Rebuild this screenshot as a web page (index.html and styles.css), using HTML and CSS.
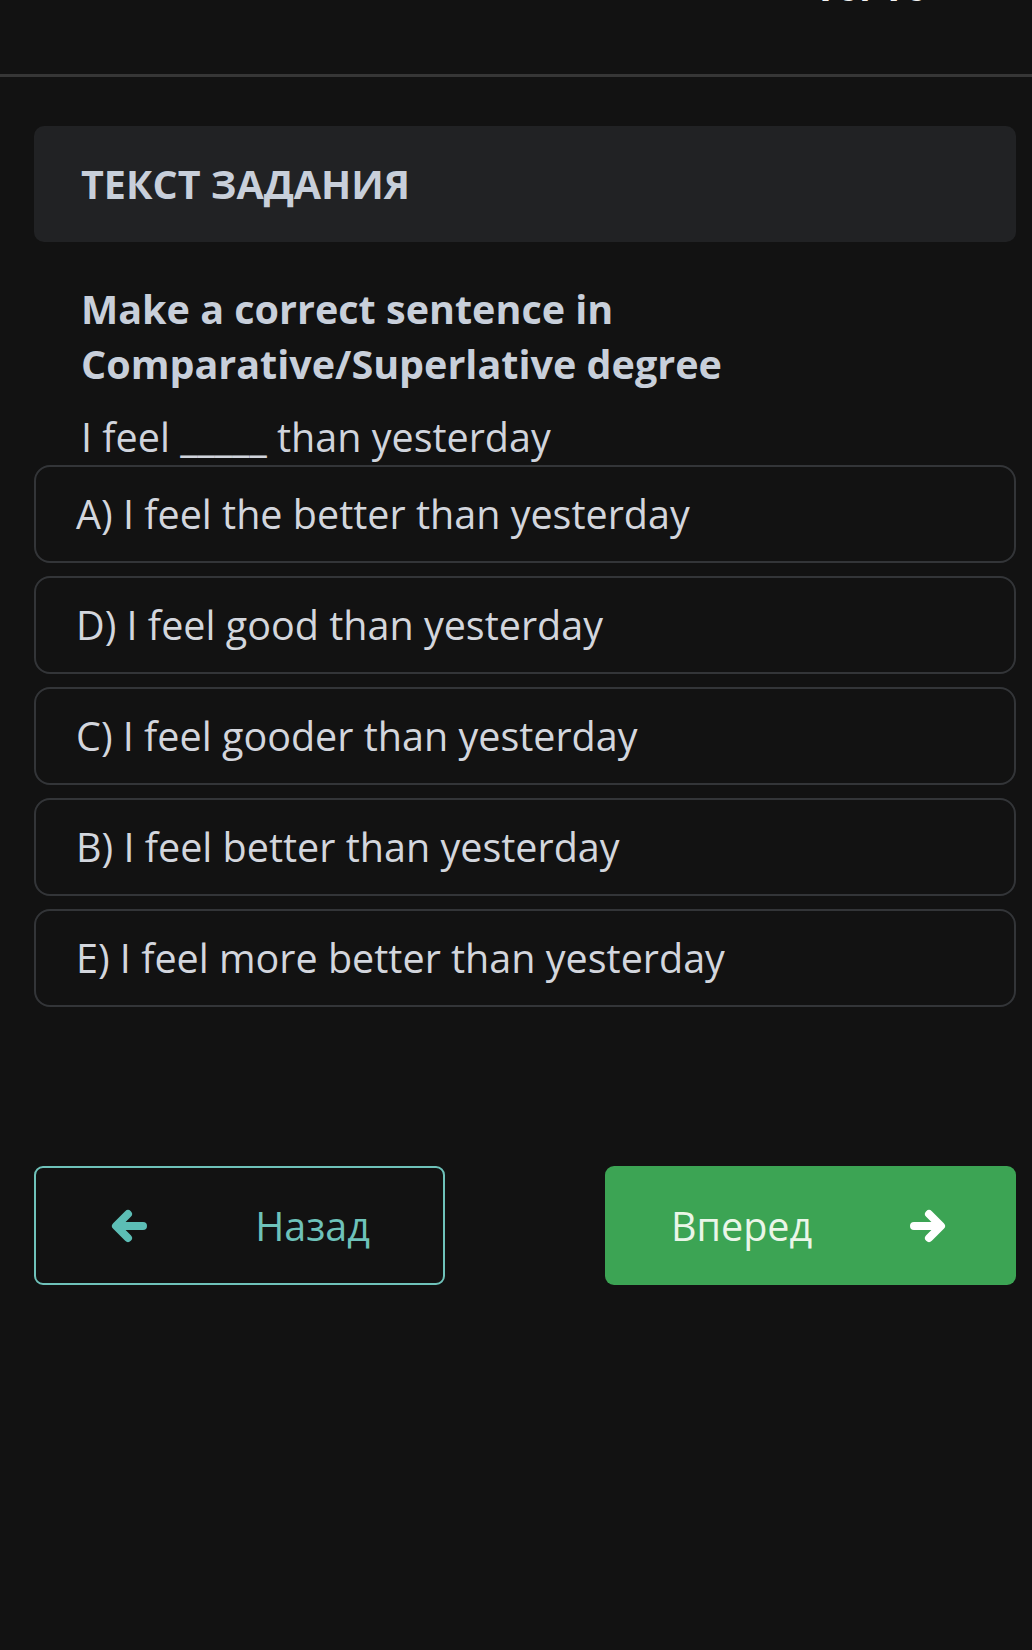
FILE: index.html
```html
<!DOCTYPE html>
<html lang="ru">
<head>
<meta charset="utf-8">
<title>Текст задания</title>
<link rel="stylesheet" href="styles.css">
</head>
<body>
<header class="topbar">
  <div class="counter">10/10</div>
</header>
<main class="page">
  <section class="task-card">
    <h2 class="task-title">ТЕКСТ ЗАДАНИЯ</h2>
  </section>
  <section class="question">
    <p class="question-head">Make a correct sentence in Comparative/Superlative degree</p>
    <p class="question-text">I feel _____ than yesterday</p>
  </section>
  <ul class="options">
    <li class="option">A) I feel the better than yesterday</li>
    <li class="option">D) I feel good than yesterday</li>
    <li class="option">C) I feel gooder than yesterday</li>
    <li class="option">B) I feel better than yesterday</li>
    <li class="option">E) I feel more better than yesterday</li>
  </ul>
  <nav class="nav">
    <button class="btn btn-back">
      <svg class="arrow" viewBox="0 0 40 36" width="40" height="36"><path d="M34 18H8M19 6L7 18L19 30" fill="none" stroke="currentColor" stroke-width="8" stroke-linecap="round" stroke-linejoin="round"/></svg>
      <span>Назад</span>
    </button>
    <button class="btn btn-next">
      <span>Вперед</span>
      <svg class="arrow" viewBox="0 0 40 36" width="40" height="36"><path d="M6 18H32M21 6L33 18L21 30" fill="none" stroke="currentColor" stroke-width="8" stroke-linecap="round" stroke-linejoin="round"/></svg>
    </button>
  </nav>
</main>
</body>
</html>
```
FILE: styles.css
```css
html, body {
  margin: 0;
  padding: 0;
  background: #121212;
}
body {
  font-family: "Open Sans", "Noto Sans", sans-serif;
  color: #d2d6dd;
  min-height: 1650px;
}
.topbar {
  height: 74px;
  border-bottom: 3px solid #363636;
  display: flex;
  justify-content: flex-end;
  overflow: hidden;
}
.counter {
  font-size: 40px;
  font-weight: 700;
  line-height: 40px;
  color: #f2f2f2;
  margin-top: -34px;
  margin-right: 102px;
  letter-spacing: 2px;
}
.page {
  padding: 49px 16px 0 34px;
}
.task-card {
  background: #212224;
  border-radius: 10px;
  height: 116px;
  display: flex;
  align-items: center;
  padding: 2px 47px 0;
  box-sizing: border-box;
}
.task-title {
  margin: 0;
  font-size: 39.5px;
  font-weight: 700;
  color: #c8cfda;
  line-height: 1;
}
.question {
  padding-left: 47px;
  margin-top: 40px;
}
.question-head {
  margin: 0;
  font-size: 39.5px;
  font-weight: 700;
  line-height: 55px;
  color: #c8cfda;
  max-width: 880px;
}
.question-text {
  margin: 17px 0 0;
  font-size: 39.5px;
  line-height: 56px;
  color: #d0d4dc;
}
.options {
  list-style: none;
  margin: 0;
  padding: 0;
  display: flex;
  flex-direction: column;
  gap: 13px;
}
.option {
  height: 98px;
  box-sizing: border-box;
  border: 2px solid #333538;
  border-radius: 16px;
  display: flex;
  align-items: center;
  padding: 0 40px;
  font-size: 39.5px;
  color: #d3d6dd;
}
.nav {
  display: flex;
  justify-content: space-between;
  margin-top: 159px;
}
.btn {
  width: 411px;
  height: 119px;
  box-sizing: border-box;
  border-radius: 9px;
  display: flex;
  align-items: center;
  justify-content: space-between;
  padding: 0 73px;
  font-family: "Open Sans", "Noto Sans", sans-serif;
  font-size: 39.5px;
  cursor: pointer;
}
.btn-back {
  background: transparent;
  border: 2px solid #6fc2ba;
  color: #6ec2ba;
}
.btn-back .arrow {
  color: #5cbdb5;
}
.btn-next {
  background: #3ca454;
  border: none;
  color: #eaf6e8;
  padding: 0 68px 0 66px;
}
.btn-next .arrow {
  color: #ffffff;
}
.arrow {
  display: block;
}
```
